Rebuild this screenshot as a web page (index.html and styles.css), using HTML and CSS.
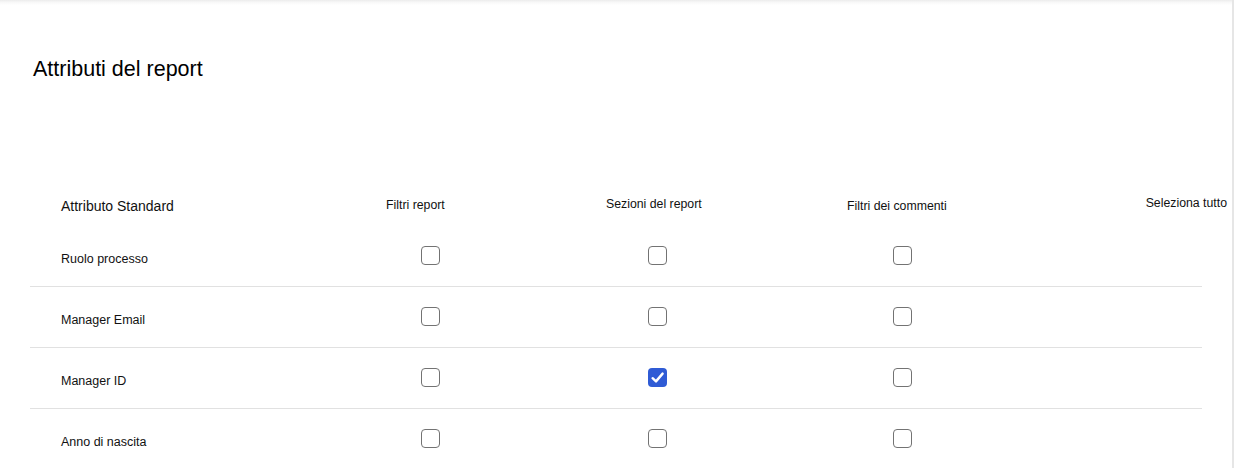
FILE: index.html
```html
<!DOCTYPE html>
<html lang="it">
<head>
<meta charset="utf-8">
<title>Attributi del report</title>
<link rel="stylesheet" href="styles.css">
</head>
<body>
<div class="panel">
  <h1 class="title">Attributi del report</h1>
  <div class="table">
    <div class="head">
      <div class="h-attr">Attributo Standard</div>
      <div class="h-col h-c1">Filtri report</div>
      <div class="h-col h-c2">Sezioni del report</div>
      <div class="h-col h-c3">Filtri dei commenti</div>
      <div class="h-col h-all">Seleziona tutto</div>
    </div>
    <div class="row">
      <div class="label">Ruolo processo</div>
      <span class="cb c1"></span>
      <span class="cb c2"></span>
      <span class="cb c3"></span>
    </div>
    <div class="row">
      <div class="label">Manager Email</div>
      <span class="cb c1"></span>
      <span class="cb c2"></span>
      <span class="cb c3"></span>
    </div>
    <div class="row">
      <div class="label">Manager ID</div>
      <span class="cb c1"></span>
      <span class="cb c2 checked"><svg viewBox="0 0 19 19" width="19" height="19"><polyline points="4.6,10.2 8,13.4 14.6,5.6" fill="none" stroke="#fff" stroke-width="2.4" stroke-linecap="round" stroke-linejoin="round"/></svg></span>
      <span class="cb c3"></span>
    </div>
    <div class="row">
      <div class="label">Anno di nascita</div>
      <span class="cb c1"></span>
      <span class="cb c2"></span>
      <span class="cb c3"></span>
    </div>
  </div>
</div>
</body>
</html>
```

FILE: styles.css
```css
html, body {
  margin: 0;
  padding: 0;
  background: #fff;
}
body {
  font-family: "Liberation Sans", Arial, sans-serif;
  color: #111;
  width: 1234px;
  height: 468px;
  overflow: hidden;
}
.panel {
  width: 1232px;
  height: 468px;
  border-right: 2px solid #e6e6e6;
  background: linear-gradient(#ececec 0, #f7f7f7 2px, #fff 5px);
  overflow: hidden;
}
.title {
  margin: 56px 0 0 33px;
  font-size: 21.5px;
  line-height: 26px;
  font-weight: 400;
  color: #000;
}
.table {
  margin: 114px 0 0 30px;
  width: 1197px;
}
.head {
  display: grid;
  grid-template-columns: 356px 220px 241px 1fr auto;
  align-items: start;
  height: 30px;
}
.h-attr {
  padding-left: 31px;
  margin-top: 2px;
  font-size: 14px;
  line-height: 17px;
}
.h-col {
  font-size: 12.3px;
  line-height: 15px;
}
.h-c1 { margin-top: 2px; }
.h-c2 { margin-top: 1px; }
.h-c3 { margin-top: 3px; }
.h-all { margin-top: 0; }
.row {
  display: grid;
  grid-template-columns: 356px 220px 241px 1fr;
  align-items: start;
  height: 60px;
  margin-right: 25px;
  border-bottom: 1px solid #e1e1e1;
}
.label {
  padding-left: 31px;
  margin-top: 26px;
  font-size: 12.5px;
  line-height: 15px;
}
.cb {
  box-sizing: border-box;
  display: block;
  width: 19px;
  height: 19px;
  margin-top: 20px;
  border: 1.6px solid #737373;
  border-radius: 4px;
  background: #fff;
}
.c1 { margin-left: 34.5px; }
.c2 { margin-left: 42px; }
.c3 { margin-left: 46px; }
.cb.checked {
  border: none;
  background: #2f5bd5;
}
.cb svg { display: block; }
```
